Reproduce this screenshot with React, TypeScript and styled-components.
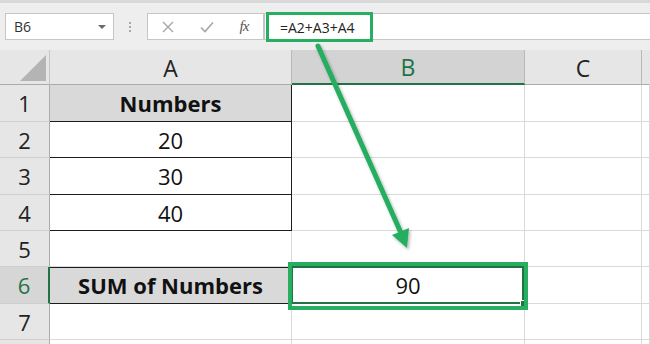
import React from 'react'
import styled, { createGlobalStyle } from 'styled-components'

const GREEN = '#27ae61'
const XL_GREEN = '#217346'

const GlobalStyle = createGlobalStyle`
  html, body {
    margin: 0;
    padding: 0;
    background: #fff;
  }
  body {
    font-family: 'Open Sans', 'Noto Sans', sans-serif;
  }
`

const Root = styled.div`
  position: relative;
  width: 650px;
  height: 344px;
  overflow: hidden;
  background: #e6e6e6;
`

const Toolbar = styled.div`
  height: 50px;
  box-sizing: border-box;
  border-top: 3px solid #d9d9d9;
  background: #eeeeee;
  padding: 10px 0 0 5px;
  display: flex;
  align-items: flex-start;
`

const NameBox = styled.div`
  width: 109px;
  height: 27px;
  box-sizing: border-box;
  background: #fff;
  border: 1px solid #c6c6c6;
  display: flex;
  align-items: center;
  justify-content: space-between;
  padding: 0 7px 0 8px;
  font-size: 14px;
  color: #333;
`

const DropArrow = styled.span`
  width: 0;
  height: 0;
  border-left: 4px solid transparent;
  border-right: 4px solid transparent;
  border-top: 4px solid #6a6a6a;
`

const Dots = styled.div`
  width: 6px;
  height: 27px;
  margin: 0 14px 0 13px;
  display: flex;
  flex-direction: column;
  align-items: center;
  justify-content: center;
  gap: 2px;
  & > span {
    width: 2px;
    height: 2px;
    background: #a8a8a8;
  }
`

const FormulaButtons = styled.div`
  width: 117px;
  height: 27px;
  box-sizing: border-box;
  background: #fff;
  border: 1px solid #c6c6c6;
  display: grid;
  grid-template-columns: 40px 38px 36px;
  align-items: center;
  justify-items: center;
`

const Fx = styled.span`
  font-family: 'Liberation Serif', 'DejaVu Serif', serif;
  font-style: italic;
  font-size: 15px;
  color: #555;
  letter-spacing: -1px;
`

const FormulaInput = styled.div`
  flex: 1;
  height: 27px;
  box-sizing: border-box;
  background: #fff;
  border: 1px solid #c6c6c6;
  border-right: none;
  display: flex;
  align-items: flex-start;
`

const FormulaHighlight = styled.div`
  margin: -2px 0 0 1px;
  width: 107px;
  height: 30px;
  box-sizing: border-box;
  border: 3px solid ${GREEN};
  padding-left: 11px;
  display: flex;
  align-items: center;
  font-size: 14px;
  color: #222;
`

const Sheet = styled.div`
  display: grid;
  grid-template-columns: 50px 242px 233px 117px 8px;
  grid-template-rows: 35px 37px 36px 37px 36px 36px 37px 36px 10px;
`

const Corner = styled.div`
  box-sizing: border-box;
  border-right: 1px solid #c6c6c6;
  border-bottom: 1px solid #ababab;
  display: flex;
  align-items: flex-end;
  justify-content: flex-end;
  padding: 0 3px 3px 0;
  &::after {
    content: '';
    width: 0;
    height: 0;
    border-left: 26px solid transparent;
    border-bottom: 26px solid #b4b4b4;
  }
`

const ColHead = styled.div<{ $selected?: boolean; $blank?: boolean }>`
  box-sizing: border-box;
  background: ${(p) => (p.$selected ? '#d3d3d3' : '#e6e6e6')};
  color: ${(p) => (p.$selected ? XL_GREEN : '#222')};
  border-right: 1px solid ${(p) => (p.$blank ? 'transparent' : '#b8b8b8')};
  border-bottom: ${(p) => (p.$selected ? `2px solid ${XL_GREEN}` : '1px solid #ababab')};
  display: flex;
  align-items: center;
  justify-content: center;
  font-size: 23px;
  padding-top: 1px;
`

const RowHead = styled.div<{ $selected?: boolean }>`
  box-sizing: border-box;
  background: ${(p) => (p.$selected ? '#d6d6d6' : '#e6e6e6')};
  color: ${(p) => (p.$selected ? XL_GREEN : '#222')};
  border-right: ${(p) => (p.$selected ? `2px solid ${XL_GREEN}` : '1px solid #ababab')};
  border-bottom: 1px solid #cfcfcf;
  display: flex;
  align-items: center;
  justify-content: center;
  font-size: 22px;
`

const Cell = styled.div<{ $boxed?: boolean; $heading?: boolean; $topEdge?: boolean; $active?: boolean }>`
  position: relative;
  z-index: ${(p) => (p.$active ? 2 : 'auto')};
  box-sizing: border-box;
  background: ${(p) => (p.$heading ? '#d9d9d9' : '#fff')};
  border-right: 1px solid ${(p) => (p.$boxed ? '#1c1c1c' : '#dadada')};
  border-bottom: 1px solid ${(p) => (p.$boxed ? '#1c1c1c' : '#dadada')};
  box-shadow: ${(p) => (p.$topEdge ? 'inset 0 1px 0 #1c1c1c' : 'none')};
  display: flex;
  align-items: center;
  justify-content: center;
  font-size: 22px;
  font-weight: ${(p) => (p.$heading ? 700 : 400)};
  color: #111;
`

const SelectionBorder = styled.div`
  position: absolute;
  left: -1px;
  top: -1px;
  right: 0;
  bottom: -1px;
  border: 2px solid ${XL_GREEN};
  pointer-events: none;
`

const FillHandle = styled.div`
  position: absolute;
  right: -3px;
  bottom: -4px;
  width: 5px;
  height: 5px;
  background: ${XL_GREEN};
  border: 1px solid #fff;
`

const CalloutBox = styled.div`
  position: absolute;
  left: -4px;
  top: -5px;
  width: 240px;
  height: 48px;
  box-sizing: border-box;
  border: 4px solid ${GREEN};
  pointer-events: none;
`

const ArrowLayer = styled.svg`
  position: absolute;
  left: 0;
  top: 0;
  z-index: 3;
  pointer-events: none;
`

const rows: { a: string; heading?: boolean; boxed?: boolean }[] = [
  { a: 'Numbers', heading: true, boxed: true },
  { a: '20', boxed: true },
  { a: '30', boxed: true },
  { a: '40', boxed: true },
  { a: '' },
  { a: 'SUM of Numbers', heading: true, boxed: true },
  { a: '' },
]

const App: React.FC = () => {
  return (
    <Root>
      <GlobalStyle />
      <Toolbar>
        <NameBox>
          B6
          <DropArrow />
        </NameBox>
        <Dots>
          <span />
          <span />
          <span />
        </Dots>
        <FormulaButtons>
          <svg width="12" height="12" viewBox="0 0 12 12">
            <path d="M1 1 L11 11 M11 1 L1 11" stroke="#a6a6a6" strokeWidth="1.4" fill="none" />
          </svg>
          <svg width="14" height="12" viewBox="0 0 14 12">
            <path d="M1 6.5 L5 10.5 L13 1.5" stroke="#a6a6a6" strokeWidth="1.6" fill="none" />
          </svg>
          <Fx>fx</Fx>
        </FormulaButtons>
        <FormulaInput>
          <FormulaHighlight>=A2+A3+A4</FormulaHighlight>
        </FormulaInput>
      </Toolbar>
      <Sheet>
        <Corner />
        <ColHead>A</ColHead>
        <ColHead $selected>B</ColHead>
        <ColHead>C</ColHead>
        <ColHead $blank />
        {rows.map((r, i) => {
          const n = i + 1
          const selected = n === 6
          return (
            <React.Fragment key={n}>
              <RowHead $selected={selected}>{n}</RowHead>
              <Cell $heading={r.heading} $boxed={r.boxed} $topEdge={n === 6}>
                {r.a}
              </Cell>
              <Cell $active={selected}>
                {selected && (
                  <>
                    90
                    <SelectionBorder />
                    <FillHandle />
                    <CalloutBox />
                  </>
                )}
              </Cell>
              <Cell />
              <Cell />
            </React.Fragment>
          )
        })}
        <RowHead />
        <Cell />
        <Cell />
        <Cell />
        <Cell />
      </Sheet>
      <ArrowLayer width="650" height="344" viewBox="0 0 650 344">
        <defs>
          <filter id="arrowShadow" x="-20%" y="-20%" width="140%" height="140%">
            <feDropShadow dx="1.5" dy="2" stdDeviation="1.5" floodColor="#000" floodOpacity="0.3" />
          </filter>
        </defs>
        <g filter="url(#arrowShadow)">
          <line x1="318" y1="46" x2="401" y2="233" stroke={GREEN} strokeWidth="5" strokeLinecap="round" />
          <polygon points="407,248 392,235 409,228" fill={GREEN} />
        </g>
      </ArrowLayer>
    </Root>
  )
}

export default App
